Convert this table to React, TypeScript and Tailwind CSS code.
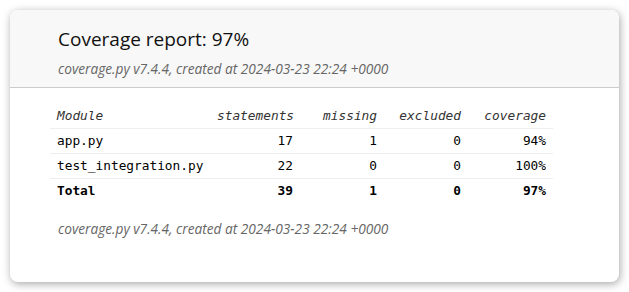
const rows = [
  { name: 'app.py', statements: 17, missing: 1, excluded: 0, coverage: '94%' },
  { name: 'test_integration.py', statements: 22, missing: 0, excluded: 0, coverage: '100%' },
];

const totals = { statements: 39, missing: 1, excluded: 0, coverage: '97%' };

const stamp = 'coverage.py v7.4.4, created at 2024-03-23 22:24 +0000';

export default function App() {
  return (
    <div className="min-h-screen bg-white pt-[10px] pl-[10px]">
      <div className="w-[609px] h-[272px] bg-white rounded-[8px] shadow-[1px_2px_8px_rgba(0,0,0,0.35)] overflow-hidden font-['Open_Sans',sans-serif]">
        <header className="h-[78px] bg-[#f8f8f8] border-b border-[#cccccc] pl-[48px] pt-[16px]">
          <h1 className="text-[19px] leading-[26px] text-[#111]">Coverage report: 97%</h1>
          <p className="mt-[8px] text-[13.7px] leading-[18px] italic text-[#666]">{stamp}</p>
        </header>

        <main className="pl-[40px] pt-[15px]">
          <table className="w-[503px] table-fixed border-collapse font-['DejaVu_Sans_Mono',monospace] text-[12.8px] text-[#000]">
            <colgroup>
              <col className="w-[160px]" />
              <col className="w-[90px]" />
              <col className="w-[84px]" />
              <col className="w-[84px]" />
              <col className="w-[85px]" />
            </colgroup>
            <thead>
              <tr className="h-[25px] border-b border-[#eeeeee] italic text-[#333] font-normal">
                <th className="px-[7px] text-left font-normal">Module</th>
                <th className="px-[7px] text-right font-normal">statements</th>
                <th className="px-[7px] text-right font-normal">missing</th>
                <th className="px-[7px] text-right font-normal">excluded</th>
                <th className="px-[7px] text-right font-normal">coverage</th>
              </tr>
            </thead>
            <tbody>
              {rows.map((r) => (
                <tr key={r.name} className="h-[25px] border-b border-[#eeeeee]">
                  <td className="px-[7px] text-left">{r.name}</td>
                  <td className="px-[7px] text-right">{r.statements}</td>
                  <td className="px-[7px] text-right">{r.missing}</td>
                  <td className="px-[7px] text-right">{r.excluded}</td>
                  <td className="px-[7px] text-right">{r.coverage}</td>
                </tr>
              ))}
            </tbody>
            <tfoot>
              <tr className="h-[25px] font-bold">
                <td className="px-[7px] text-left">Total</td>
                <td className="px-[7px] text-right">{totals.statements}</td>
                <td className="px-[7px] text-right">{totals.missing}</td>
                <td className="px-[7px] text-right">{totals.excluded}</td>
                <td className="px-[7px] text-right">{totals.coverage}</td>
              </tr>
            </tfoot>
          </table>
        </main>

        <footer className="pl-[48px] pt-[17px]">
          <p className="text-[13.7px] leading-[18px] italic text-[#666]">{stamp}</p>
        </footer>
      </div>
    </div>
  );
}
